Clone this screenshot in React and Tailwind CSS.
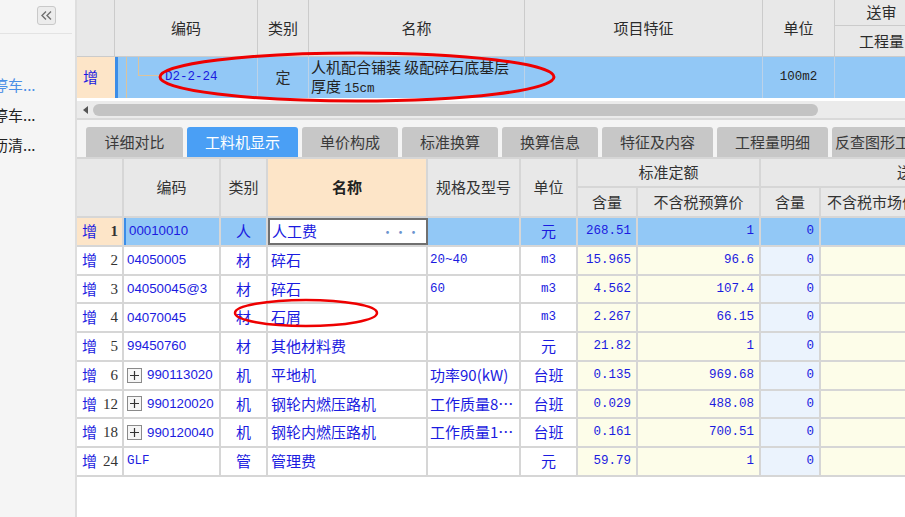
import React from 'react';

const rows = [
  { n: '1', code: '00010010', type: '人', name: '人工费', spec: '', unit: '元', qty: '268.51', price: '1', sel: true },
  { n: '2', code: '04050005', type: '材', name: '碎石', spec: '20~40', unit: 'm3', qty: '15.965', price: '96.6' },
  { n: '3', code: '04050045@3', type: '材', name: '碎石', spec: '60', unit: 'm3', qty: '4.562', price: '107.4' },
  { n: '4', code: '04070045', type: '材', name: '石屑', spec: '', unit: 'm3', qty: '2.267', price: '66.15' },
  { n: '5', code: '99450760', type: '材', name: '其他材料费', spec: '', unit: '元', qty: '21.82', price: '1' },
  { n: '6', code: '990113020', type: '机', name: '平地机', spec: '功率90(kW)', unit: '台班', qty: '0.135', price: '969.68', plus: true },
  { n: '12', code: '990120020', type: '机', name: '钢轮内燃压路机', spec: '工作质量8…', unit: '台班', qty: '0.029', price: '488.08', plus: true },
  { n: '18', code: '990120040', type: '机', name: '钢轮内燃压路机', spec: '工作质量1…', unit: '台班', qty: '0.161', price: '700.51', plus: true },
  { n: '24', code: 'GLF', type: '管', name: '管理费', spec: '', unit: '元', qty: '59.79', price: '1', mono: true },
];

const tabs = [
  { label: '详细对比', w: 'w-[97px]' },
  { label: '工料机显示', w: 'w-[111px]', active: true },
  { label: '单价构成', w: 'w-[96px]' },
  { label: '标准换算', w: 'w-[96px]' },
  { label: '换算信息', w: 'w-[96px]' },
  { label: '特征及内容', w: 'w-[111px]' },
  { label: '工程量明细', w: 'w-[111px]' },
  { label: '反查图形工程量', w: 'w-[111px]' },
];

const LeftPanel = () => (
  <div className="w-[77px] shrink-0 h-full bg-[#f5f5f5] border-r-2 border-[#dedede] overflow-hidden">
    <div className="h-[34px] flex items-start justify-end pr-[16px] pt-[6px] border-b border-[#e3e3e3] mr-[3px]">
      <div className="w-[19px] h-[19px] rounded-[3px] border border-[#c9c9c9] bg-[#ececec] flex items-center justify-center">
        <svg width="11" height="9" viewBox="0 0 11 9">
          <path d="M5 0.5 L1 4.5 L5 8.5 M10 0.5 L6 4.5 L10 8.5" fill="none" stroke="#6f6f6f" strokeWidth="1.4" />
        </svg>
      </div>
    </div>
    <div className="pt-[36px] text-[15px] leading-[30px] whitespace-nowrap -ml-[7px]">
      <div className="text-[#4b8fe6]">停车...</div>
      <div className="text-[#222]">停车...</div>
      <div className="text-[#222]">沥清...</div>
    </div>
  </div>
);

const TopGrid = () => {
  const h = 'bg-[#e8e8e8] border-r border-b border-[#cbcbcb] flex items-center justify-center';
  const d = 'bg-[#92c8f6] border-r border-[#bcd2e8] flex items-center';
  return (
    <div className="grid grid-cols-[38px_143px_51px_216px_238px_72px_94px] grid-rows-[26px_31px_41px] w-[852px] text-[15px] text-[#2b2b2b]">
      <div className={`${h} row-span-2`} />
      <div className={`${h} row-span-2`}>编码</div>
      <div className={`${h} row-span-2`}>类别</div>
      <div className={`${h} row-span-2`}>名称</div>
      <div className={`${h} row-span-2`}>项目特征</div>
      <div className={`${h} row-span-2`}>单位</div>
      <div className={h}>送审</div>
      <div className={h}>工程量</div>

      <div className="bg-[#fde5c8] flex items-center pl-[6px] text-[#1b1be0]">增</div>
      <div className={`${d} items-stretch`}>
        <div className="w-[3px] bg-[#3b8de8]" />
        <div className="w-[9px] border-r border-[#dcc39c]" />
        <div className="ml-[11px] w-[21px] h-[19px] border-l border-b border-[#dcc39c]" />
        <div className="ml-[6px] self-center font-['Liberation_Mono',monospace] text-[12.5px] text-[#1b1be0]">D2-2-24</div>
      </div>
      <div className={`${d} justify-center`}>定</div>
      <div className={`${d} pl-[2px] leading-[19px] text-[#222]`}>
        <div>
          人机配合铺装 级配碎石底基层
          <br />
          厚度 <span className="font-['Liberation_Mono',monospace] text-[12.5px]">15cm</span>
        </div>
      </div>
      <div className={d} />
      <div className={`${d} justify-center font-['Liberation_Mono',monospace] text-[12.5px] text-[#222]`}>100m2</div>
      <div className={d} />
    </div>
  );
};

const ScrollBar = () => (
  <div className="border-b-2 border-[#d9d9d9] pt-[3px] bg-white">
    <div className="h-[17px] bg-[#ebebeb] flex items-center">
      <svg className="ml-[6px]" width="5" height="8" viewBox="0 0 5 8">
        <path d="M5 0 L0 4 L5 8 Z" fill="#555" />
      </svg>
      <div className="ml-[5px] w-[725px] h-[12px] rounded-full bg-[#c3c3c3]" />
    </div>
  </div>
);

const Tabs = () => (
  <div className="bg-[#f4f4f4] pt-[7px] pl-[9px] flex gap-[4px] whitespace-nowrap">
    {tabs.map((t) => (
      <div
        key={t.label}
        className={`${t.w} shrink-0 h-[30px] rounded-t-[3px] flex items-center justify-center text-[15px] overflow-hidden ${
          t.active ? 'bg-[#4a9ff5] text-white' : 'bg-[#c7c7c7] text-[#3a3a3a]'
        }`}
      >
        {t.label}
      </div>
    ))}
  </div>
);

const PlusBox = () => (
  <span className="w-[15px] h-[15px] border border-[#8a8a8a] bg-[#f6f6f6] flex items-center justify-center shrink-0">
    <svg width="9" height="9" viewBox="0 0 9 9">
      <path d="M4.5 0 V9 M0 4.5 H9" stroke="#333" strokeWidth="1.2" />
    </svg>
  </span>
);

const Row = ({ r }) => {
  const c = 'h-full border-r-2 border-[#d6d6d6] flex items-center shrink-0 overflow-hidden whitespace-nowrap';
  const num = "font-['Liberation_Mono',monospace] text-[12.5px] justify-end pr-[5px]";
  const bg = (normal) => (r.sel ? 'bg-[#92c8f6]' : normal);
  return (
    <div className="flex h-[28.75px] border-b-2 border-[#d6d6d6] text-[#1b1be0] text-[15px]">
      <div className={`${c} w-[47px] justify-between pl-[5px] pr-[4px] ${r.sel ? 'bg-[#fde5c8]' : 'bg-white'}`}>
        <span>增</span>
        <span className={`font-['Liberation_Serif',serif] text-[15px] text-[#333] ${r.sel ? 'font-bold' : ''}`}>{r.n}</span>
      </div>
      <div className={`${c} w-[97px] pl-[3px] gap-[5px] ${bg('bg-white')} ${r.sel ? 'border-l-2 border-l-[#3b8de8]' : ''}`}>
        {r.plus && <PlusBox />}
        <span className={r.mono ? "font-['Liberation_Mono',monospace] text-[12.5px]" : "font-['Liberation_Sans',sans-serif] text-[13.3px]"}>
          {r.code}
        </span>
      </div>
      <div className={`${c} w-[47px] justify-center ${bg('bg-white')}`}>{r.type}</div>
      {r.sel ? (
        <div className="h-full w-[160px] shrink-0 border-2 border-[#707070] bg-white flex items-center justify-between pl-[2px] pr-[6px]">
          <span>人工费</span>
          <span className="text-[#6b93cf] text-[13px] leading-none">···</span>
        </div>
      ) : (
        <div className={`${c} w-[160px] pl-[3px] bg-white`}>{r.name}</div>
      )}
      <div className={`${c} w-[93px] pl-[2px] ${bg('bg-white')}`}>
        <span className={/^[0-9~]+$/.test(r.spec) ? "font-['Liberation_Mono',monospace] text-[12.5px]" : ''}>{r.spec}</span>
      </div>
      <div className={`${c} w-[57px] justify-center ${bg('bg-white')} ${r.unit === 'm3' ? "font-['Liberation_Mono',monospace] text-[12.5px]" : ''}`}>
        {r.unit}
      </div>
      <div className={`${c} w-[60px] ${num} ${bg('bg-[#fdfde9]')}`}>{r.qty}</div>
      <div className={`${c} w-[123px] ${num} ${bg('bg-[#fdfde9]')}`}>{r.price}</div>
      <div className={`${c} w-[60px] ${num} ${bg('bg-[#ebf3fd]')}`}>0</div>
      <div className={`${c} w-[104px] ${bg('bg-[#fdfde9]')}`} />
      <div className={`${c} w-[140px] ${bg('bg-[#fdfde9]')}`} />
    </div>
  );
};

const BottomTable = () => {
  const h = 'bg-[#e8e8e8] border-r-2 border-b-2 border-[#d6d6d6] flex items-center justify-center whitespace-nowrap overflow-hidden';
  return (
    <div className="border-t-2 border-[#d6d6d6] w-[988px] bg-white">
      <div className="grid grid-cols-[47px_97px_47px_160px_93px_57px_60px_123px_60px_104px_140px] grid-rows-[29px_30px] text-[15px] text-[#333]">
        <div className={`${h} row-span-2`} />
        <div className={`${h} row-span-2`}>编码</div>
        <div className={`${h} row-span-2`}>类别</div>
        <div className={`${h} row-span-2 bg-[#fde5c8] font-bold text-[#222]`}>名称</div>
        <div className={`${h} row-span-2`}>规格及型号</div>
        <div className={`${h} row-span-2`}>单位</div>
        <div className={`${h} col-span-2`}>标准定额</div>
        <div className={`${h} col-span-3`}>送审</div>
        <div className={h}>含量</div>
        <div className={h}>不含税预算价</div>
        <div className={h}>含量</div>
        <div className={h}>不含税市场价</div>
        <div className={h}>不含税市场合价</div>
      </div>
      {rows.map((r) => (
        <Row key={r.n} r={r} />
      ))}
    </div>
  );
};

const Ellipses = () => (
  <svg className="absolute inset-0 pointer-events-none" width="905" height="517" viewBox="0 0 905 517">
    <ellipse cx="357" cy="77" rx="197" ry="24" fill="none" stroke="#ee0000" strokeWidth="3" />
    <ellipse cx="306" cy="313" rx="71" ry="13" fill="none" stroke="#ee0000" strokeWidth="2.5" />
  </svg>
);

export default function App() {
  return (
    <div className="relative w-[905px] h-[517px] flex overflow-hidden bg-white font-['Noto_Sans_CJK_SC','Liberation_Sans',sans-serif]">
      <LeftPanel />
      <div className="flex-1 min-w-0 flex flex-col overflow-hidden">
        <TopGrid />
        <ScrollBar />
        <Tabs />
        <BottomTable />
      </div>
      <Ellipses />
    </div>
  );
}
